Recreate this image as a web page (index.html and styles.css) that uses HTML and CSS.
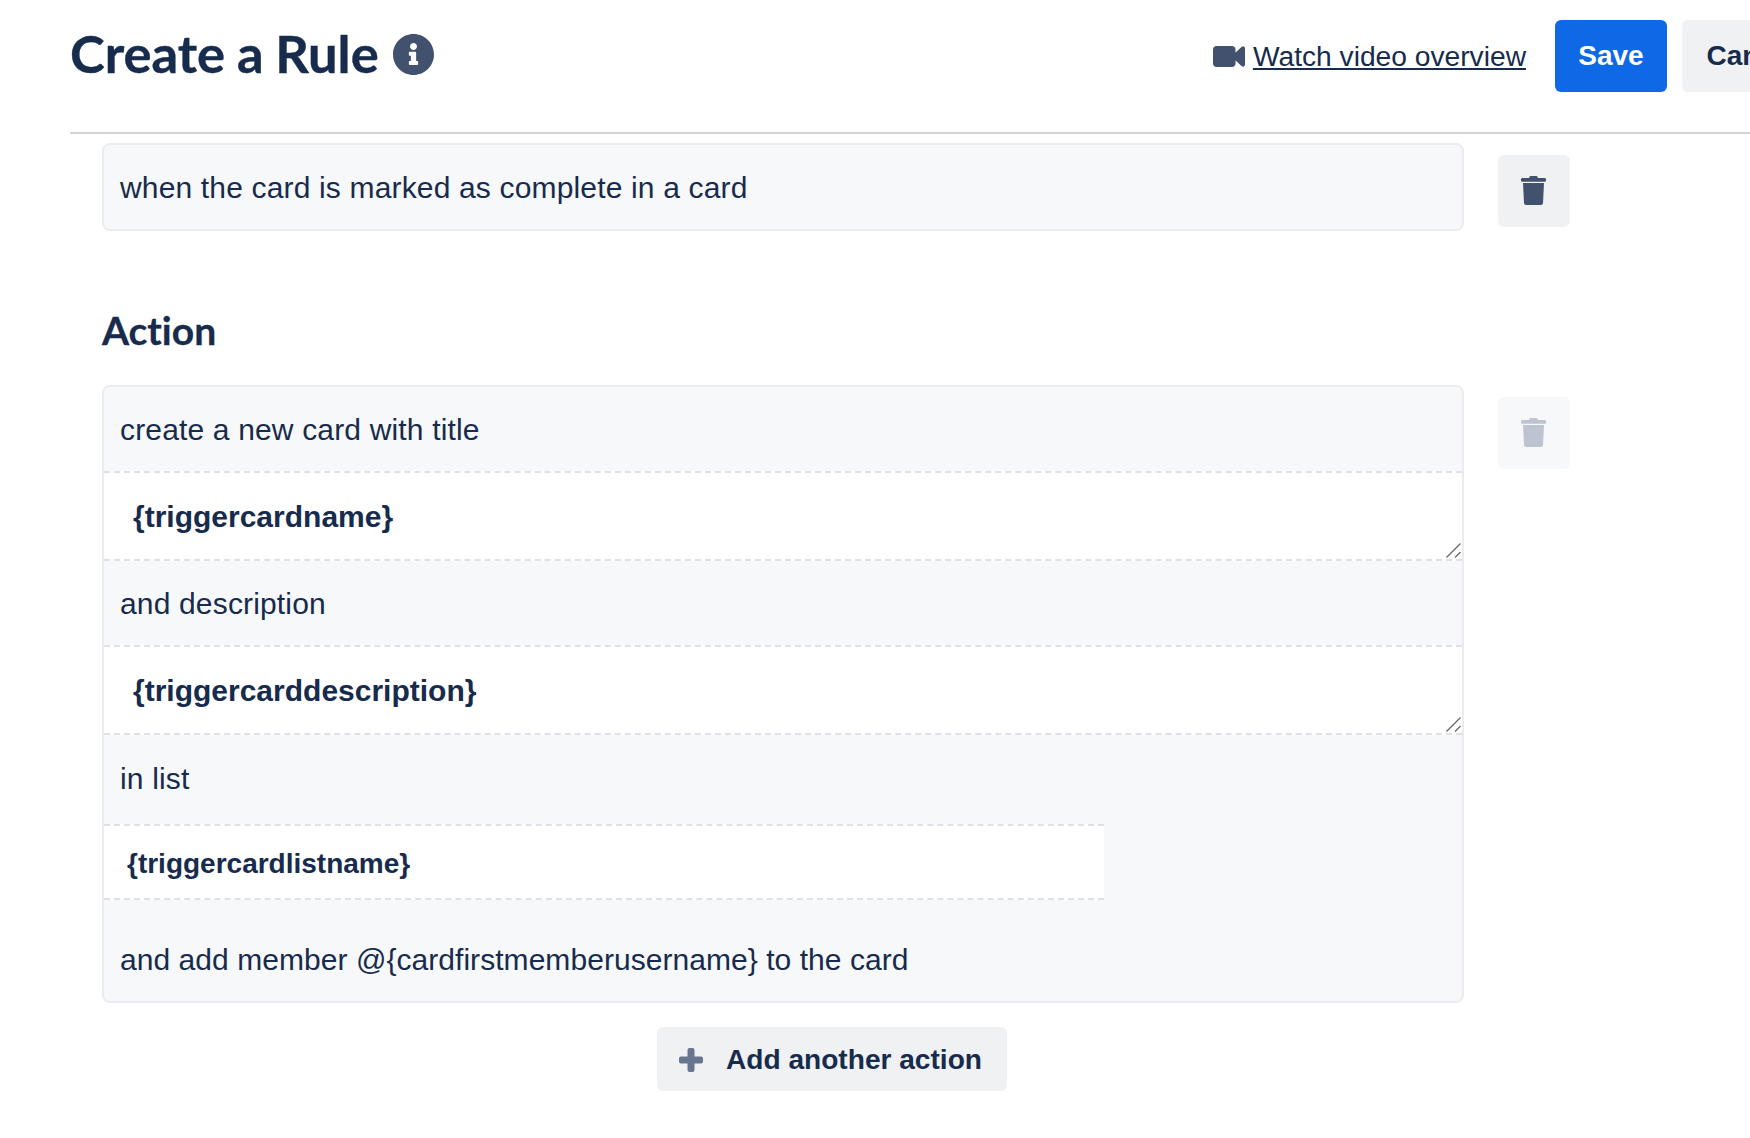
FILE: index.html
```html
<!DOCTYPE html>
<html lang="en">
<head>
<meta charset="utf-8">
<title>Create a Rule</title>
<link rel="stylesheet" href="styles.css">
</head>
<body>
<div class="page">
  <header class="header">
    <div class="title-group">
      <h1 class="title">Create a Rule</h1>
      <svg class="info-icon" viewBox="8 8 496 496"><path d="M256 8C119 8 8 119.1 8 256c0 137 111 248 248 248s248-111 248-248C504 119.1 393 8 256 8zm0 110c23.2 0 42 18.8 42 42s-18.8 42-42 42-42-18.8-42-42 18.8-42 42-42zm56 254c0 6.6-5.4 12-12 12h-88c-6.6 0-12-5.4-12-12v-24c0-6.6 5.400-12 12-12h12v-64h-12c-6.6 0-12-5.4-12-12v-24c0-6.6 5.4-12 12-12h64c6.6 0 12 5.4 12 12v100h12c6.6 0 12 5.4 12 12v24z"/></svg>
    </div>
    <div class="header-actions">
      <svg class="video-icon" viewBox="0 0 32 21"><path d="M3.500 0h15.500c2 0 3.500 1.500 3.500 3.500v14c0 2-1.500 3.500-3.500 3.500H3.500C1.500 21 0 19.500 0 17.500v-14C0 1.500 1.500 0 3.500 0zM21 8l7.500-7c1.500-1.300 3.500-.5 3.500 1.500v16c0 2-2 2.800-3.500 1.500L21 13z"/></svg>
      <a class="video-link" href="#">Watch video overview</a>
      <button class="btn btn-primary">Save</button>
      <button class="btn btn-secondary">Cancel</button>
    </div>
  </header>

  <main class="content">
    <section class="rule-row rule-row-trigger">
      <div class="card">
        <div class="text-row">when the card is marked as complete in a card</div>
      </div>
      <button class="trash-btn" aria-label="Delete">
        <svg class="trash-icon" viewBox="0 0 25 29"><path d="M8 2 8.500.8C8.700.3 9.100 0 9.700 0h5.600c.6 0 1 .3 1.200.8L17 2h6.500c.9 0 1.500.6 1.500 1.300v1.100c0 .7-.6 1.300-1.500 1.300H1.500C.6 5.700 0 5.100 0 4.400V3.300C0 2.600.6 2 1.500 2zM2 7h21l-1 20c-.1 1.100-1 2-2.100 2H5.100C4 29 3.100 28.100 3 27z"/></svg>
      </button>
    </section>

    <h2 class="section-title">Action</h2>

    <section class="rule-row">
      <div class="card">
        <div class="text-row">create a new card with title</div>
        <div class="field field-area">
          <span>{triggercardname}</span>
          <svg class="grip" viewBox="0 0 15 15"><path d="M.5 14.500 14.500.5M9 14.500l5.500-5.500"/></svg>
        </div>
        <div class="text-row">and description</div>
        <div class="field field-area">
          <span>{triggercarddescription}</span>
          <svg class="grip" viewBox="0 0 15 15"><path d="M.5 14.500 14.500.5M9 14.500l5.500-5.500"/></svg>
        </div>
        <div class="text-row text-row-list">in list</div>
        <div class="field field-select">{triggercardlistname}</div>
        <div class="text-row text-row-last">and add member @{cardfirstmemberusername} to the card</div>
      </div>
      <button class="trash-btn trash-btn-disabled" aria-label="Delete" disabled>
        <svg class="trash-icon" viewBox="0 0 25 29"><path d="M8 2 8.500.8C8.700.3 9.100 0 9.700 0h5.600c.6 0 1 .3 1.200.8L17 2h6.500c.9 0 1.500.6 1.500 1.300v1.100c0 .7-.6 1.300-1.500 1.300H1.500C.6 5.700 0 5.100 0 4.400V3.300C0 2.600.6 2 1.500 2zM2 7h21l-1 20c-.1 1.100-1 2-2.100 2H5.100C4 29 3.100 28.100 3 27z"/></svg>
      </button>
    </section>

    <div class="add-row">
      <button class="btn-add">
        <svg class="plus-icon" viewBox="0 0 24 24"><rect x="8.500" y="0" width="7" height="24" rx="2"/><rect x="0" y="8.500" width="24" height="7" rx="2"/></svg>
        <span>Add another action</span>
      </button>
    </div>
  </main>
</div>
</body>
</html>
```

FILE: styles.css
```css
* { box-sizing: border-box; }

html, body {
  margin: 0;
  padding: 0;
  background: #fff;
}

body {
  font-family: "Liberation Sans", Arial, sans-serif;
  color: #172b4d;
  overflow: hidden;
}

.page {
  width: 1750px;
  height: 1138px;
  overflow: hidden;
}

.header {
  display: flex;
  align-items: flex-start;
  justify-content: space-between;
  width: 1753px;
  height: 134px;
  margin-left: 70px;
  padding-top: 20px;
  border-bottom: 2px solid #d3d3d3;
}

.title-group {
  display: flex;
  align-items: center;
  gap: 14px;
  height: 72px;
  margin-top: -3px;
}

.title {
  margin: 0;
  font-family: Lato, sans-serif;
  font-weight: 700;
  font-size: 52.500px;
  line-height: 72px;
  word-spacing: -1px;
  font-variant-ligatures: none;
  -webkit-text-stroke: 0.4px #172b4d;
}

.info-icon {
  width: 41px;
  height: 41px;
  margin-top: 3px;
  fill: #42526e;
}

.header-actions {
  display: flex;
  align-items: center;
}

.video-icon {
  width: 32px;
  height: 21px;
  margin-right: 8px;
  fill: #42526e;
}

.video-link {
  margin-right: 29px;
  padding-top: 1px;
  color: #172b4d;
  font-size: 28.200px;
}

.btn {
  height: 72px;
  border: 0;
  border-radius: 6px;
  font-family: "Liberation Sans", Arial, sans-serif;
  font-weight: 700;
  font-size: 28px;
}

.btn-primary {
  width: 112px;
  margin-right: 15px;
  background: #0f68e6;
  color: #fff;
}

.btn-secondary {
  width: 141px;
  background: #f0f1f3;
  color: #172b4d;
}

.content {
  padding-left: 102px;
  width: 1562px;
  box-sizing: content-box;
}

.rule-row {
  display: flex;
  align-items: flex-start;
  gap: 34px;
}

.rule-row-trigger {
  margin-top: 9px;
}

.card {
  width: 1362px;
  border: 2px solid #ebecf0;
  border-radius: 8px;
  background: #f7f8fa;
  overflow: hidden;
}

.text-row {
  display: flex;
  align-items: center;
  height: 84px;
  padding-top: 2px;
  padding-left: 16px;
  font-size: 30px;
  letter-spacing: 0.16px;
  line-height: 40px;
}

.text-row-list {
  height: 89px;
  padding-top: 0;
  padding-bottom: 2px;
}

.text-row-last {
  height: 101px;
  padding-top: 18px;
  letter-spacing: 0.05px;
}

.field {
  position: relative;
  display: flex;
  align-items: center;
  background: #fff;
  border-top: 2px dashed #dfe1e6;
  border-bottom: 2px dashed #dfe1e6;
  font-weight: 700;
}

.field-area {
  height: 90px;
  padding-top: 1px;
  padding-left: 29px;
  font-size: 30px;
}

.field-select {
  width: 1000px;
  height: 76px;
  padding-top: 4px;
  padding-left: 23px;
  font-size: 28px;
}

.grip {
  position: absolute;
  right: 1px;
  bottom: 1px;
  width: 15px;
  height: 15px;
  fill: none;
  stroke: #666;
  stroke-width: 1.300;
}

.trash-btn {
  display: flex;
  align-items: center;
  justify-content: center;
  flex: none;
  width: 72px;
  height: 72px;
  margin-top: 12px;
  padding: 0 1px 1px 0;
  border: 0;
  border-radius: 6px;
  background: #f0f1f3;
}

.trash-btn-disabled {
  background: #f7f8fa;
}

.trash-icon {
  width: 25px;
  height: 29px;
  fill: #42526e;
}

.trash-btn-disabled .trash-icon {
  fill: #bdc3d0;
}

.section-title {
  margin: 76px 0 32px;
  font-family: Lato, sans-serif;
  font-weight: 700;
  font-size: 39px;
  line-height: 46px;
  font-variant-ligatures: none;
  -webkit-text-stroke: 0.3px #172b4d;
}

.add-row {
  display: flex;
  justify-content: center;
  width: 1460px;
  margin-top: 24px;
}

.btn-add {
  display: flex;
  align-items: center;
  gap: 23px;
  height: 64px;
  padding: 1px 25px 0 22px;
  border: 0;
  border-radius: 6px;
  background: #f0f1f3;
  color: #172b4d;
  font-family: "Liberation Sans", Arial, sans-serif;
  font-weight: 700;
  font-size: 28.100px;
}

.plus-icon {
  width: 24px;
  height: 24px;
  fill: #67758f;
}
```
